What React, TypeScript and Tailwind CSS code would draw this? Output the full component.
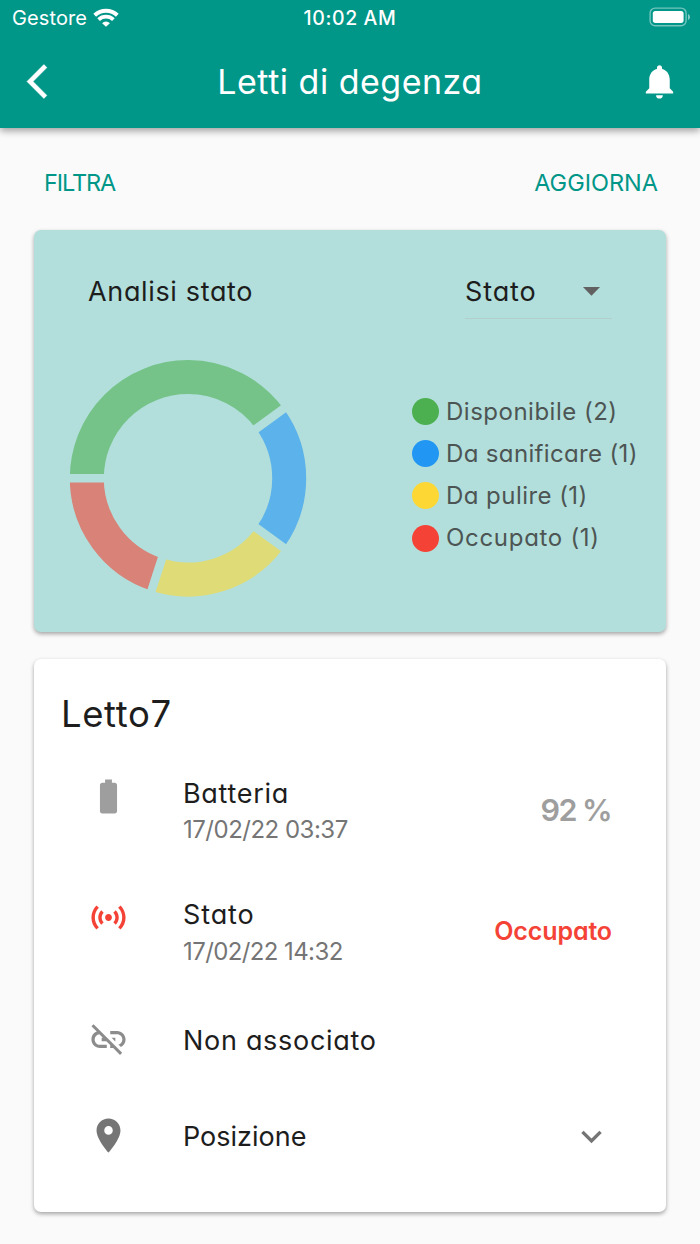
import type { ReactNode } from "react";
import {
  MdArrowDropDown,
  MdBatteryFull,
  MdExpandMore,
  MdLinkOff,
  MdLocationOn,
  MdNotifications,
  MdSensors,
} from "react-icons/md";

const legend = [
  { label: "Disponibile (2)", dot: "bg-[#4caf50]", text: "tracking-[0.5px]" },
  { label: "Da sanificare (1)", dot: "bg-[#2196f3]", text: "tracking-[0.35px]" },
  { label: "Da pulire (1)", dot: "bg-[#fdd835]", text: "tracking-[0.45px]" },
  { label: "Occupato (1)", dot: "bg-[#f44336]", text: "tracking-[0.7px]" },
];

const slices = [
  { color: "#75c389", start: 180, share: 2 },
  { color: "#5cb2ea", start: 324, share: 1 },
  { color: "#dfdc78", start: 36, share: 1 },
  { color: "#d98277", start: 108, share: 1 },
];

function Donut() {
  return (
    <svg className="h-[238px] w-[238px]" viewBox="-119 -119.3 238 238" fill="none">
      {slices.map((s) => (
        <circle
          key={s.start}
          r="101.2"
          stroke={s.color}
          strokeWidth="34"
          pathLength="5"
          strokeDasharray={`${s.share} ${5 - s.share}`}
          transform={`rotate(${s.start})`}
        />
      ))}
      {slices.map((s) => (
        <path
          key={s.start}
          d="M80 0H119"
          stroke="#b2dfdb"
          strokeWidth="8.6"
          transform={`rotate(${s.start})`}
        />
      ))}
    </svg>
  );
}

function StatusBar() {
  return (
    <div className="grid h-[34px] grid-cols-3 items-center pt-[3px] pr-[9px] pl-3">
      <div className="-mt-px flex items-center gap-[6px]">
        <span className="text-[20px] leading-none tracking-[0.1px]">Gestore</span>
        <svg className="-mt-[2px] h-[19px] w-[26px]" viewBox="0 0 26 19" fill="none" stroke="currentColor">
          <path d="M1.7 7.2A16.6 16.6 0 0 1 24.3 7.2" strokeWidth="4" />
          <path d="M5.600 11.600A10.800 10.800 0 0 1 20.400 11.600" strokeWidth="3.8" />
          <path d="M13 18.800 9.1 15.200A5.5 5.5 0 0 1 16.9 15.200Z" fill="currentColor" stroke="none" />
        </svg>
      </div>
      <span className="mr-[3px] text-center text-[19.5px] leading-none font-medium tracking-[0.6px]">10:02 AM</span>
      <svg className="-mt-[3px] h-5 w-[42px] justify-self-end" viewBox="0 0 42 20" fill="none">
        <rect x="1.1" y="1.1" width="36" height="17.6" rx="5" stroke="white" strokeOpacity="0.45" strokeWidth="1.4" />
        <rect x="3.8" y="3.9" width="30.8" height="12" rx="2.6" fill="white" />
        <path d="M39 7v6c1.3-.5 2-1.7 2-3s-.7-2.500-2-3Z" fill="white" fillOpacity="0.5" />
      </svg>
    </div>
  );
}

function Row({ icon, children, className }: { icon: ReactNode; children: ReactNode; className: string }) {
  return (
    <div className={`flex pr-[54px] pl-[54px] ${className}`}>
      <div className="w-[95px] shrink-0">{icon}</div>
      {children}
    </div>
  );
}

export default function App() {
  return (
    <div className="h-[1244px] w-[700px] overflow-hidden bg-[#fafafa] font-['Inter',sans-serif] text-[#1d1d1d] [font-feature-settings:'cv11']">
      <header className="relative h-[128px] bg-[#009688] text-white shadow-[0_3px_7px_rgba(0,0,0,0.36)]">
        <StatusBar />
        <div className="flex h-[95px] items-center justify-between pr-[20px] pl-[17px]">
          <svg className="h-[41px] w-[41px]" viewBox="0 0 24 24" fill="currentColor" stroke="currentColor" strokeWidth="0.3">
            <path d="M17.510 3.870 15.730 2.100 5.840 12l9.900 9.900 1.770-1.770L9.380 12Z" />
          </svg>
          <h1 className="pl-[3px] text-[34px] leading-none tracking-[0.5px]">Letti di degenza</h1>
          <MdNotifications className="size-[41px]" />
        </div>
      </header>

      <div className="flex h-[102px] items-center justify-between pt-[7px] pr-[42px] pl-[44px] text-[23.500px] text-[#009688]">
        <span className="tracking-[-1.1px]">FILTRA</span>
        <span>AGGIORNA</span>
      </div>

      <section className="mx-[34px] h-[402px] rounded-[7px] bg-[#b2dfdb] pt-[34px] shadow-[0_2px_4px_rgba(0,0,0,0.35)]">
        <div className="flex h-[55px] justify-between pr-[54px] pl-[54px] text-[27px]">
          <h2 className="leading-[55px] tracking-[0.65px]">Analisi stato</h2>
          <div className="flex w-[147px] items-center justify-between border-b border-[#b3cfcc] leading-[54px]">
            <span className="pt-px tracking-[0.9px]">Stato</span>
            <MdArrowDropDown className="-mt-px size-[41px] text-[#616161]" />
          </div>
        </div>
        <div className="flex pt-[40px] pl-[35px]">
          <Donut />
          <ul className="ml-[105px] pt-[31.500px]">
            {legend.map((l) => (
              <li key={l.label} className="flex h-[42.200px] items-center gap-[7px]">
                <span className={`size-[27px] rounded-full ${l.dot}`} />
                <span className={`text-[24px] leading-none whitespace-nowrap text-[#4d5554] ${l.text}`}>{l.label}</span>
              </li>
            ))}
          </ul>
        </div>
      </section>

      <section className="mx-[34px] mt-[27px] h-[553px] rounded-[7px] bg-white pt-[30px] shadow-[0_2px_4px_rgba(0,0,0,0.35)]">
        <h2 className="h-[50px] pl-[27px] text-[36.500px] leading-[50px] tracking-[0.6px]">Letto7</h2>
        <Row className="mt-[37px] h-[121px]" icon={<MdBatteryFull className="size-[41px] text-[#9e9e9e]" />}>
          <div className="flex-1">
            <p className="text-[27px] leading-[36px] tracking-[0.7px]">Batteria</p>
            <p className="text-[24px] leading-[36px] tracking-[-0.5px] text-[#757575]">17/02/22 03:37</p>
          </div>
          <span className="pr-px text-[30.500px] leading-[68px] font-semibold tracking-[-1.6px] text-[#9e9e9e]">92 %</span>
        </Row>
        <Row className="h-[122px]" icon={<MdSensors className="size-[41px] text-[#f44336]" />}>
          <div className="flex-1">
            <p className="text-[27px] leading-[36px] tracking-[0.9px]">Stato</p>
            <p className="text-[24px] leading-[37px] tracking-[-0.6px] text-[#757575]">17/02/22 14:32</p>
          </div>
          <span className="text-[25px] leading-[69px] font-semibold tracking-[-0.1px] text-[#f44336]">Occupato</span>
        </Row>
        <Row className="h-[97px]" icon={<MdLinkOff className="size-[41px] text-[#8c8c8c]" />}>
          <p className="text-[27px] leading-[43px] tracking-[0.7px]">Non associato</p>
        </Row>
        <Row className="h-[42px]" icon={<MdLocationOn className="-mt-px size-[41px] text-[#757575]" />}>
          <p className="flex-1 text-[27px] leading-[42px]">Posizione</p>
          <MdExpandMore className="size-[41px] text-[#757575]" />
        </Row>
      </section>
    </div>
  );
}
